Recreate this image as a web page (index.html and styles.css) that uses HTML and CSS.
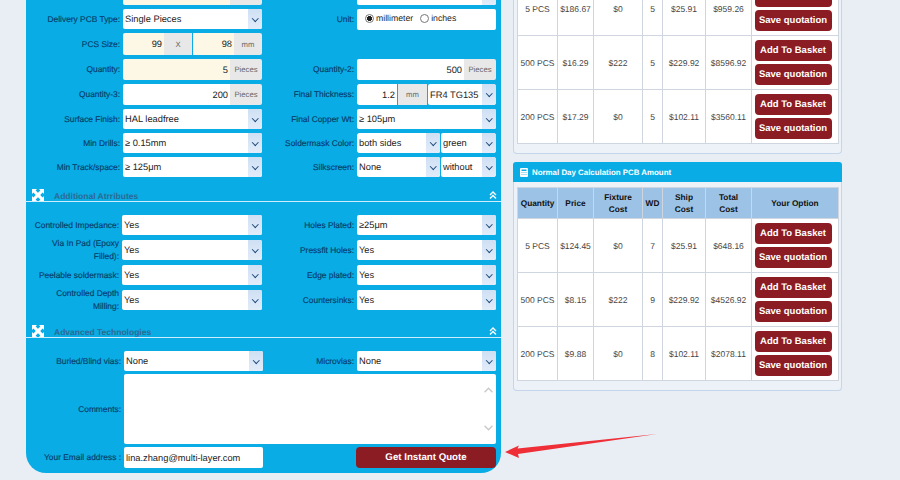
FILE: index.html
```html
<!DOCTYPE html>
<html lang="en">
<head>
<meta charset="utf-8">
<title>PCB Instant Quote</title>
<link rel="stylesheet" href="styles.css">
</head>
<body>
<svg class="defs" width="0" height="0" aria-hidden="true">
  <symbol id="expand" viewBox="0 0 12 12">
    <path fill="#fff" d="M0 0h5L3.6 1.4 6 3.8 8.400 1.400 7 0h5v5L10.600 3.600 8.200 6l2.400 2.400L12 7v5H7l1.400-1.400L6 8.200 3.600 10.600 5 12H0V7l1.400 1.400L3.800 6 1.400 3.600 0 5z"/>
  </symbol>
  <symbol id="collapse" viewBox="0 0 8 8">
    <path fill="none" stroke="#fff" stroke-width="1.300" d="M1 4l3-3 3 3M1 7.500l3-3 3 3"/>
  </symbol>
</svg>
<main class="page">
  <form class="panel">
    <div class="grid grid-main">
      <span></span>
      <div class="group"><span class="text cream grow"></span><span class="addon w-pieces"></span></div>
      <span></span>
      <div class="sel"><span class="val"></span><i class="arrow"></i></div>

      <label class="lbl">Delivery PCB Type:</label>
      <div class="sel"><span class="val">Single Pieces</span><i class="arrow"></i></div>
      <label class="lbl">Unit:</label>
      <div class="unit">
        <span class="radio on"></span><span>millimeter</span>
        <span class="radio second"></span><span>inches</span>
      </div>

      <label class="lbl">PCS Size:</label>
      <div class="group"><span class="text cream grow">99</span><span class="addon w-x">X</span><span class="text cream grow split">98</span><span class="addon w-mm">mm</span></div>
      <span></span><span></span>

      <label class="lbl">Quantity:</label>
      <div class="group"><span class="text cream grow">5</span><span class="addon w-pieces">Pieces</span></div>
      <label class="lbl">Quantity-2:</label>
      <div class="group"><span class="text grow">500</span><span class="addon w-pieces">Pieces</span></div>

      <label class="lbl">Quantity-3:</label>
      <div class="group"><span class="text grow">200</span><span class="addon w-pieces">Pieces</span></div>
      <label class="lbl">Final Thickness:</label>
      <div class="group gap1"><span class="text w-thick">1.2</span><span class="addon w-mm2">mm</span><div class="sel grow"><span class="val">FR4 TG135</span><i class="arrow"></i></div></div>

      <label class="lbl">Surface Finish:</label>
      <div class="sel"><span class="val">HAL leadfree</span><i class="arrow"></i></div>
      <label class="lbl">Final Copper Wt:</label>
      <div class="sel"><span class="val">≥ 105μm</span><i class="arrow"></i></div>

      <label class="lbl">Min Drills:</label>
      <div class="sel"><span class="val">≥ 0.15mm</span><i class="arrow"></i></div>
      <label class="lbl">Soldermask Color:</label>
      <div class="group gap1"><div class="sel w-mask"><span class="val">both sides</span><i class="arrow"></i></div><div class="sel grow"><span class="val">green</span><i class="arrow"></i></div></div>

      <label class="lbl">Min Track/space:</label>
      <div class="sel"><span class="val">≥ 125μm</span><i class="arrow"></i></div>
      <label class="lbl">Silkscreen:</label>
      <div class="group gap1"><div class="sel w-mask"><span class="val">None</span><i class="arrow"></i></div><div class="sel grow"><span class="val">without</span><i class="arrow"></i></div></div>
    </div>

    <div class="section-head">
      <svg class="ic-expand"><use href="#expand"/></svg>
      <span class="section-title">Additional Atrributes</span>
      <svg class="ic-collapse"><use href="#collapse"/></svg>
    </div>

    <div class="grid grid-extra">
      <label class="lbl">Controlled Impedance:</label>
      <div class="sel"><span class="val">Yes</span><i class="arrow"></i></div>
      <label class="lbl">Holes Plated:</label>
      <div class="sel"><span class="val">≥25μm</span><i class="arrow"></i></div>

      <label class="lbl lbl-narrow">Via In Pad (Epoxy Filled):</label>
      <div class="sel"><span class="val">Yes</span><i class="arrow"></i></div>
      <label class="lbl">Pressfit Holes:</label>
      <div class="sel"><span class="val">Yes</span><i class="arrow"></i></div>

      <label class="lbl">Peelable soldermask:</label>
      <div class="sel"><span class="val">Yes</span><i class="arrow"></i></div>
      <label class="lbl">Edge plated:</label>
      <div class="sel"><span class="val">Yes</span><i class="arrow"></i></div>

      <label class="lbl lbl-narrow">Controlled Depth Milling:</label>
      <div class="sel"><span class="val">Yes</span><i class="arrow"></i></div>
      <label class="lbl">Countersinks:</label>
      <div class="sel"><span class="val">Yes</span><i class="arrow"></i></div>
    </div>

    <div class="section-head">
      <svg class="ic-expand"><use href="#expand"/></svg>
      <span class="section-title">Advanced Technologies</span>
      <svg class="ic-collapse"><use href="#collapse"/></svg>
    </div>

    <div class="grid grid-adv">
      <label class="lbl">Buried/Blind vias:</label>
      <div class="sel"><span class="val">None</span><i class="arrow"></i></div>
      <label class="lbl">Microvias:</label>
      <div class="sel"><span class="val">None</span><i class="arrow"></i></div>

      <label class="lbl">Comments:</label>
      <div class="comments">
        <svg class="scroll" viewBox="0 0 8 5"><path d="M.5 4.500L4 1l3.500 3.500"/></svg>
        <svg class="scroll" viewBox="0 0 8 5"><path d="M.5.5L4 4 7.500.5"/></svg>
      </div>

      <label class="lbl">Your Email address :</label>
      <div class="sel"><span class="val">lina.zhang@multi-layer.com</span></div>
      <span></span>
      <button class="btn btn-quote" type="button">Get Instant Quote</button>
    </div>
  </form>

  <div class="side">
    <section class="card card-first">
      <table class="quote">
        <colgroup><col class="c1"><col class="c2"><col class="c3"><col class="c4"><col class="c5"><col class="c6"><col class="c7"></colgroup>
        <tr><td>5 PCS</td><td>$186.67</td><td>$0</td><td>5</td><td>$25.91</td><td>$959.26</td><td><div class="opts"><button class="btn" type="button" aria-label="Add To Basket"></button><button class="btn" type="button">Save quotation</button></div></td></tr>
        <tr><td>500 PCS</td><td>$16.29</td><td>$222</td><td>5</td><td>$229.92</td><td>$8596.92</td><td><div class="opts"><button class="btn" type="button">Add To Basket</button><button class="btn" type="button">Save quotation</button></div></td></tr>
        <tr><td>200 PCS</td><td>$17.29</td><td>$0</td><td>5</td><td>$102.11</td><td>$3560.11</td><td><div class="opts"><button class="btn" type="button">Add To Basket</button><button class="btn" type="button">Save quotation</button></div></td></tr>
      </table>
    </section>

    <section class="card">
      <h2 class="card-title">
        <svg class="ic-calc" viewBox="0 0 8 9"><path fill="#fff" fill-rule="evenodd" d="M1 0h6a1 1 0 011 1v7a1 1 0 01-1 1H1a1 1 0 01-1-1V1a1 1 0 011-1zm.500 1.500v1.500h5V1.500zm0 2.700v.8h1v-.8zm2 0v.8h1v-.8zm2 0v.8h1v-.8zm-4 1.800v.8h1V6zm2 0v.8h1V6zm2 0v.8h1V6z"/></svg>
        Normal Day Calculation PCB Amount
      </h2>
      <table class="quote">
        <colgroup><col class="c1"><col class="c2"><col class="c3"><col class="c4"><col class="c5"><col class="c6"><col class="c7"></colgroup>
        <tr><th>Quantity</th><th>Price</th><th>Fixture Cost</th><th>WD</th><th class="wrap">Ship Cost</th><th class="wrap">Total Cost</th><th>Your Option</th></tr>
        <tr><td>5 PCS</td><td>$124.45</td><td>$0</td><td>7</td><td>$25.91</td><td>$648.16</td><td><div class="opts"><button class="btn" type="button">Add To Basket</button><button class="btn" type="button">Save quotation</button></div></td></tr>
        <tr><td>500 PCS</td><td>$8.15</td><td>$222</td><td>9</td><td>$229.92</td><td>$4526.92</td><td><div class="opts"><button class="btn" type="button">Add To Basket</button><button class="btn" type="button">Save quotation</button></div></td></tr>
        <tr><td>200 PCS</td><td>$9.88</td><td>$0</td><td>8</td><td>$102.11</td><td>$2078.11</td><td><div class="opts"><button class="btn" type="button">Add To Basket</button><button class="btn" type="button">Save quotation</button></div></td></tr>
      </table>
    </section>
  </div>
</main>
<svg class="callout" viewBox="0 0 160 30" aria-hidden="true">
  <polygon fill="#ee2f38" points="0,19 14,12.500 12.500,15.500 152,1 13,21 14,25"/>
</svg>
</body>
</html>
```

FILE: styles.css
```css
* { box-sizing: border-box; text-rendering: geometricPrecision; }
html, body { margin: 0; height: 480px; overflow: hidden; }
body {
  background: #e9eef5;
  font-family: "Liberation Sans", Arial, sans-serif;
  position: relative;
}
.defs { position: absolute; }
.page {
  display: flex;
  align-items: flex-start;
  gap: 12px;
  padding-left: 26px;
}
.panel {
  width: 475px;
  margin-top: -16px;
  padding-bottom: 5px;
  background: #0aace6;
  border-radius: 0 0 20px 20px;
}
.grid {
  display: grid;
  grid-template-columns: 94px 139px 89px 139px;
  column-gap: 3px;
}
.grid-main {
  grid-template-rows: 21px 20px 22px 21px 21px 20px 20px 20px;
  row-gap: 4px;
}
.grid-extra {
  grid-template-columns: 93px 140px 89px 139px;
  grid-template-rows: repeat(4, 20px);
  row-gap: 5px;
  margin-top: 13px;
}
.grid-adv {
  grid-template-columns: 95px 139px 88px 139px;
  grid-template-rows: 20px 70px 21px;
  row-gap: 3px;
  margin-top: 13px;
}
.lbl {
  display: flex;
  align-items: center;
  justify-content: flex-end;
  text-align: right;
  font-size: 8.400px;
  line-height: 13px;
  color: #063c68;
  -webkit-text-stroke: 0.15px #063c68;
}
.lbl-narrow { padding-left: 22px; }
.sel, .text, .unit {
  background: #fff;
  border-radius: 2px;
  font-size: 9.3px;
  color: #222;
}
.sel {
  display: flex;
  align-items: center;
  min-width: 0;
  overflow: hidden;
}
.val {
  flex: 1;
  padding-left: 2px;
  white-space: nowrap;
}
.arrow {
  flex: none;
  width: 14px;
  height: 100%;
  display: flex;
  align-items: center;
  justify-content: center;
  background: linear-gradient(#cfe0f4, #e2ecf9);
}
.arrow::after {
  content: "";
  width: 3.5px;
  height: 3.5px;
  margin-top: -2px;
  border-right: 1.5px solid #1d4a7c;
  border-bottom: 1.5px solid #1d4a7c;
  transform: rotate(45deg);
}
.group { display: flex; min-width: 0; border-radius: 2px; overflow: hidden; }
.gap1 { gap: 1px; }
.grow { flex: 1; min-width: 0; }
.text {
  display: flex;
  align-items: center;
  justify-content: flex-end;
  padding-right: 2px;
  border-radius: 0;
}
.cream { background: #fdf8e6; }
.split { margin-left: 1px; }
.addon {
  flex: none;
  display: flex;
  align-items: center;
  justify-content: center;
  background: #e8e8e8;
  font-size: 7.700px;
  color: #666;
}
.w-pieces { width: 32px; }
.w-x { width: 28px; }
.w-mm { width: 28px; }
.w-mm2 { width: 29px; }
.w-thick { width: 40px; border-radius: 2px 0 0 2px; }
.w-mask { width: 83px; }
.unit {
  display: flex;
  align-items: center;
  padding: 0 0 3px 8px;
  height: 21px;
  font-size: 8.700px;
}
.radio {
  width: 9px;
  height: 9px;
  margin-right: 2px;
  flex: none;
  border: 1px solid #777;
  border-radius: 50%;
  background: #fff;
}
.radio.second { margin-left: 7px; }
.radio.on { background: radial-gradient(circle, #222 0 2.400px, #fff 2.800px); }
.section-head {
  display: flex;
  align-items: flex-end;
  height: 14px;
  margin-top: 11px;
  padding: 0 4px 0 6px;
  border-bottom: 1px solid #cfeefb;
}
.grid-extra + .section-head { margin-top: 14px; }
.ic-expand { width: 12px; height: 12px; flex: none; }
.section-title {
  flex: 1;
  margin-left: 10px;
  font-size: 8.500px;
  font-weight: bold;
  line-height: 10px;
  color: #2b6a92;
}
.ic-collapse { width: 8px; height: 8px; margin-bottom: 2px; flex: none; }
.comments {
  grid-column: 2 / 5;
  display: flex;
  flex-direction: column;
  align-items: flex-end;
  justify-content: space-between;
  padding: 13px 3px 13px 0;
  background: #fff;
  border-radius: 2px;
}
.scroll {
  width: 9px;
  height: 6px;
  fill: none;
  stroke: #c9c9c9;
  stroke-width: 1.200;
}
.btn {
  display: block;
  width: 77px;
  height: 21px;
  padding: 0;
  border: 0;
  border-radius: 4px;
  background: #8b1c24;
  color: #fff;
  font: bold 9.500px "Liberation Sans", Arial, sans-serif;
}
.btn-quote {
  width: 140px;
  margin-left: -1px;
  font-size: 9.700px;
}
.side {
  display: flex;
  flex-direction: column;
  gap: 8px;
  width: 329px;
}
.card {
  padding: 0 3px 9px 3px;
  background: #edf2f9;
  border: 1px solid #c5d5ea;
  border-top: 0;
  border-radius: 4px;
}
.card-first { margin-top: -19px; padding-bottom: 9px; }
.card-title {
  display: flex;
  align-items: center;
  gap: 4px;
  height: 20px;
  margin: 0 -4px 5px;
  padding-left: 7px;
  background: #0aace6;
  border-radius: 3px 3px 0 0;
  color: #fff;
  font-size: 7.900px;
  font-weight: bold;
}
.ic-calc { width: 8px; height: 9px; flex: none; }
.quote {
  width: 321px;
  table-layout: fixed;
  border-collapse: collapse;
  background: #fff;
}
.c1 { width: 40px; }
.c2 { width: 36px; }
.c3 { width: 49px; }
.c4 { width: 20px; }
.c5 { width: 43px; }
.c6 { width: 46px; }
.c7 { width: 87px; }
.quote th, .quote td {
  padding: 0;
  border: 1px solid #cfd6e0;
  text-align: center;
  font-size: 8.500px;
  color: #444;
}
.quote td { height: 54px; }
.quote th {
  height: 31px;
  background: #9cc2e6;
  color: #111;
  font-size: 8.300px;
  line-height: 12px;
}
.quote .wrap { padding: 0 8px; }
.opts {
  display: flex;
  flex-direction: column;
  align-items: center;
  gap: 3px;
  padding-right: 4px;
}
.callout {
  position: absolute;
  left: 505px;
  top: 433px;
  width: 160px;
  height: 30px;
}
```
